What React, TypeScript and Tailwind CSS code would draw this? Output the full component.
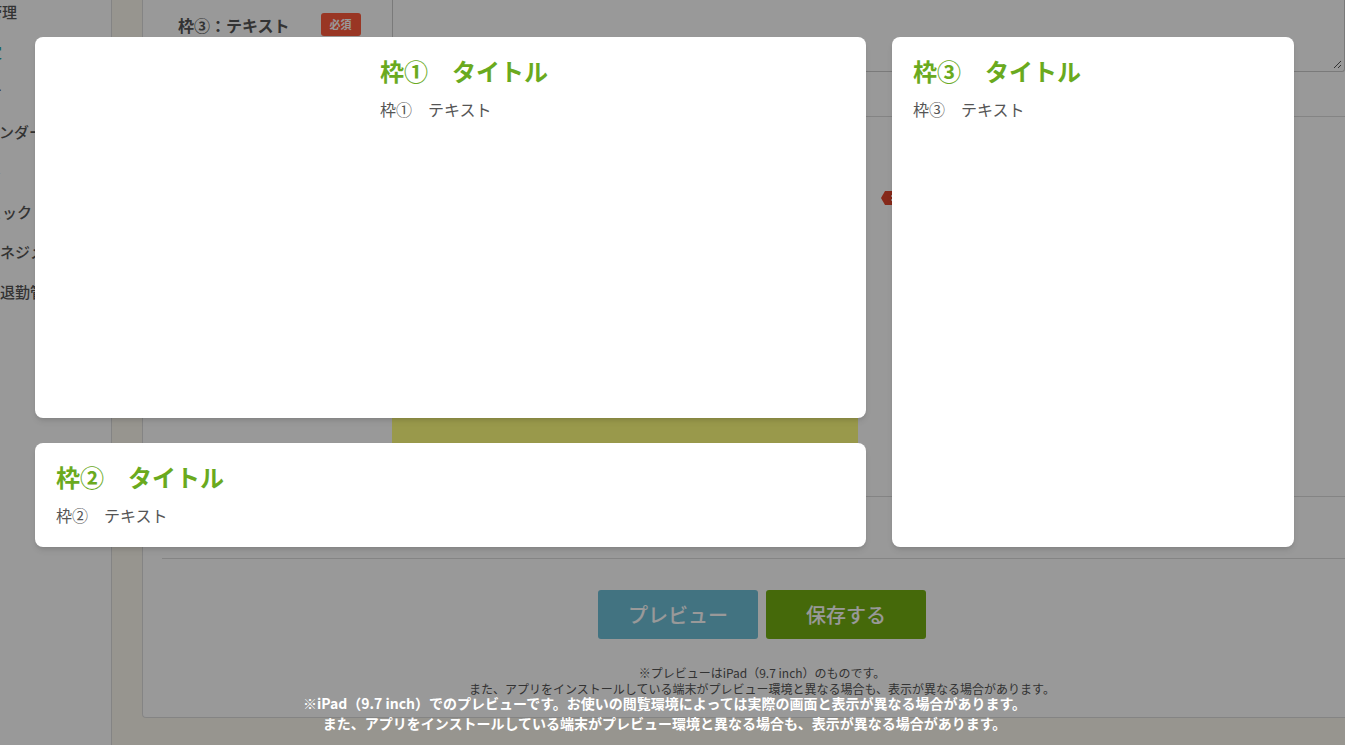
const sideItems = [
  { label: "勤怠管理", ml: "-ml-[43px]", color: "text-[#555]" },
  { label: "店舗設定", ml: "-ml-[58px]", color: "text-[#2aa6a0]" },
  { label: "お知らせ", ml: "-ml-[58px]", color: "text-[#555]" },
  { label: "カレンダー", ml: "-ml-[31px]", color: "text-[#555]" },
  { label: "ポイント", ml: "-ml-[58px]", color: "text-[#555]" },
  { label: "チェック", ml: "-ml-[28px]", color: "text-[#555]" },
  { label: "マネジメント", ml: "-ml-[15px]", color: "text-[#555]" },
  { label: "出退勤管理", ml: "-ml-[15px]", color: "text-[#555]" },
];

function PanelTitle({ title, text }: { title: string; text: string }) {
  return (
    <div className="flex flex-col">
      <h2 className="text-[24px] leading-[32px] font-bold text-[#6aaa1e]">{title}</h2>
      <p className="mt-[10px] text-[16px] leading-[24px] text-[#555]">{text}</p>
    </div>
  );
}

export default function App() {
  return (
    <div className="relative w-[1345px] h-[745px] overflow-hidden bg-[#fcf8ee] font-['Noto_Sans_CJK_JP','Noto_Sans',sans-serif]">
      {/* Underlying page */}
      <div className="flex h-full">
        {/* Sidebar */}
        <div className="w-[112px] shrink-0 bg-white border-r border-[#ddd] overflow-hidden">
          <div className="-mt-[8px] flex flex-col">
            {sideItems.map((it) => (
              <div key={it.label} className="h-[40px] flex items-center whitespace-nowrap">
                <span className={`${it.ml} ${it.color} text-[15px] font-medium`}>{it.label}</span>
              </div>
            ))}
          </div>
        </div>

        {/* Beige strip */}
        <div className="w-[30px] shrink-0" />

        {/* Main card */}
        <div className="w-[1236px] shrink-0 h-[718px] bg-white border-l border-r border-b border-[#ddd] rounded-b-[4px] flex flex-col">
          {/* Row 1 */}
          <div className="flex h-[72px]">
            <div className="w-[249px] shrink-0 pl-[35px] flex items-start pt-[13px]">
              <span className="text-[16px] leading-[24px] font-bold text-[#555]">枠③：テキスト</span>
              <span className="ml-[31px] h-[23px] w-[40px] rounded-[3px] bg-[#ff5a3c] text-white text-[11px] font-bold flex items-center justify-center">
                必須
              </span>
            </div>
            <div className="w-[953px] h-[72px] border border-t-0 border-[#ccc] rounded-b-[3px] flex items-end justify-end p-[2px]">
              <svg width="9" height="9" viewBox="0 0 9 9">
                <path d="M8 1L1 8M8 5L5 8" stroke="#555" strokeWidth="1" />
              </svg>
            </div>
          </div>
          <div className="mx-[19px] h-[45px] border-b border-[#ddd]" />

          {/* Row 2 */}
          <div className="mx-[19px] h-[380px] border-b border-[#ddd] flex">
            <div className="w-[230px] shrink-0" />
            <div className="w-[466px] mt-[20px] h-[306px] flex flex-col">
              <div className="flex-1 bg-white" />
              <div className="h-[40px] bg-[#ffff7e]" />
            </div>
            <div className="ml-[23px] mt-[73px]">
              <svg width="16" height="16" viewBox="0 0 16 16">
                <path d="M4 1H12L16 8L12 15H4L0 8Z" fill="#e0452c" />
                <circle cx="11" cy="6" r="1" fill="#fff" />
                <circle cx="11" cy="10" r="1" fill="#fff" />
              </svg>
            </div>
          </div>

          {/* Row 3 */}
          <div className="mx-[19px] h-[62px] border-b border-[#ddd]" />

          {/* Buttons */}
          <div className="mt-[31px] pl-[4px] flex justify-center gap-[8px]">
            <button className="w-[160px] h-[49px] rounded-[3px] bg-[#6fc0d8] text-white text-[20px] font-medium">
              プレビュー
            </button>
            <button className="w-[160px] h-[49px] rounded-[3px] bg-[#74b012] text-white text-[20px] font-medium">
              保存する
            </button>
          </div>
          <div className="mt-[26px] pl-[4px] text-center text-[12px] leading-[16px] text-[#555]">
            <p>※プレビューはiPad（9.7 inch）のものです。</p>
            <p>また、アプリをインストールしている端末がプレビュー環境と異なる場合も、表示が異なる場合があります。</p>
          </div>
        </div>
      </div>

      {/* Preview overlay */}
      <div className="absolute inset-0 bg-black/40 flex flex-col px-[35px] pt-[37px] pb-[12px]">
        <div className="grid grid-cols-[831px_402px] grid-rows-[381px_104px] gap-x-[26px] gap-y-[25px]">
          <div className="col-start-1 row-start-1 bg-white rounded-[8px] shadow-md flex px-[21px] pt-[18px]">
            <div className="w-[304px] shrink-0" />
            <div className="ml-[20px]">
              <PanelTitle title="枠①　タイトル" text="枠①　テキスト" />
            </div>
          </div>
          <div className="col-start-2 row-start-1 row-span-2 bg-white rounded-[8px] shadow-md px-[21px] pt-[18px]">
            <PanelTitle title="枠③　タイトル" text="枠③　テキスト" />
          </div>
          <div className="col-start-1 row-start-2 bg-white rounded-[8px] shadow-md px-[21px] pt-[18px]">
            <PanelTitle title="枠②　タイトル" text="枠②　テキスト" />
          </div>
        </div>
        <div className="mt-auto w-[1259px] text-center text-white font-bold text-[14px] leading-[20px]">
          <p>※iPad（9.7 inch）でのプレビューです。お使いの閲覧環境によっては実際の画面と表示が異なる場合があります。</p>
          <p>また、アプリをインストールしている端末がプレビュー環境と異なる場合も、表示が異なる場合があります。</p>
        </div>
      </div>
    </div>
  );
}
